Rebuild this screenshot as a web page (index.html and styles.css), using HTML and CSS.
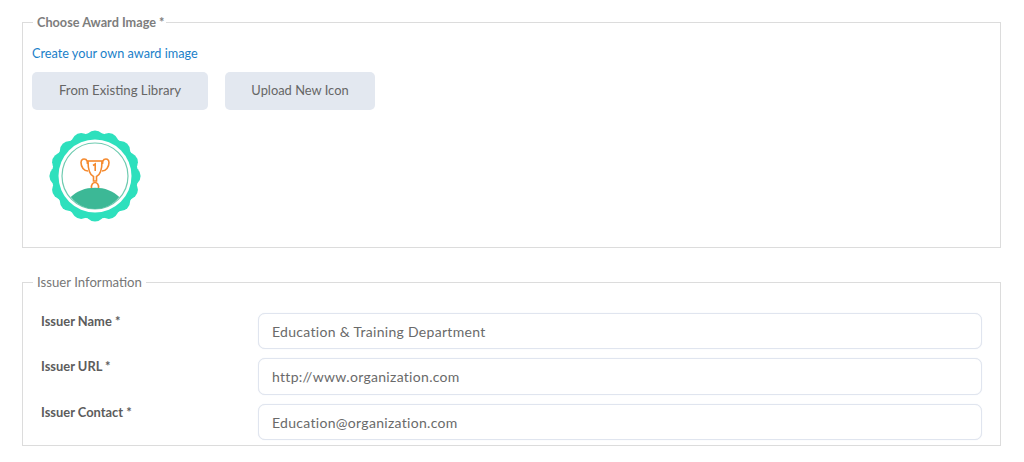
FILE: index.html
```html
<!DOCTYPE html>
<html lang="en">
<head>
<meta charset="utf-8">
<title>Award</title>
<link rel="stylesheet" href="styles.css">
</head>
<body>
<form class="page">
  <fieldset class="panel panel-image">
    <legend class="legend legend-strong">Choose Award Image *</legend>
    <a class="link" href="#">Create your own award image</a>
    <div class="actions">
      <button type="button" class="btn btn-library">From Existing Library</button>
      <button type="button" class="btn btn-upload">Upload New Icon</button>
    </div>
    <svg class="badge" width="94" height="94" viewBox="0 0 94 94" aria-hidden="true">
      <g fill="#2ee0bd">
        <circle cx="47" cy="47" r="43"/>
        <circle cx="47" cy="11" r="9.6"/><circle cx="60.8" cy="13.7" r="9.6"/><circle cx="72.5" cy="21.5" r="9.6"/><circle cx="80.3" cy="33.2" r="9.6"/>
        <circle cx="83" cy="47" r="9.6"/><circle cx="80.3" cy="60.8" r="9.6"/><circle cx="72.5" cy="72.5" r="9.6"/><circle cx="60.8" cy="80.3" r="9.6"/>
        <circle cx="47" cy="83" r="9.6"/><circle cx="33.2" cy="80.3" r="9.6"/><circle cx="21.5" cy="72.5" r="9.6"/><circle cx="13.7" cy="60.8" r="9.6"/>
        <circle cx="11" cy="47" r="9.6"/><circle cx="13.7" cy="33.2" r="9.6"/><circle cx="21.5" cy="21.5" r="9.6"/><circle cx="33.2" cy="13.7" r="9.6"/>
      </g>
      <circle cx="47" cy="47" r="36.5" fill="#fff"/>
      <circle cx="47" cy="47" r="33" fill="#fff" stroke="#6fcbb0" stroke-width="1.2"/>
      <path d="M22.7 68 C29 62 37 58.7 47 58.7 C57 58.7 65 62 71.3 68 C65 76 56 80 47 80 C38 80 29 76 22.7 68 Z" fill="#3cb896"/>
      <g fill="none" stroke="#f58a2e" stroke-width="1.6">
        <path d="M39 32 H55"/>
        <path d="M40 32 C40 41 42 46 45.5 47.5 V52 H48.5 V47.5 C52 46 54 41 54 32"/>
        <path d="M40 42 C36 42 33 38 33 33.5 C33 30 36 29.5 38 30.5 C39.5 31.5 39.5 33 39.5 35"/>
        <path d="M54 42 C58 42 61 38 61 33.5 C61 30 58 29.5 56 30.5 C54.5 31.5 54.5 33 54.5 35"/>
        <path d="M45 36.5 L47.2 35 V42"/>
        <path d="M43.5 59 C43 55.5 45 53.5 47 53.5 C49 53.5 51 55.5 50.5 59"/>
      </g>
    </svg>
  </fieldset>

  <fieldset class="panel panel-issuer">
    <legend class="legend legend-issuer">Issuer Information</legend>
    <div class="row">
      <label class="label" for="name">Issuer Name *</label>
      <input class="input" id="name" type="text" value="Education &amp; Training Department">
    </div>
    <div class="row row-tall">
      <label class="label" for="url">Issuer URL *</label>
      <input class="input input-tall" id="url" type="text" value="http://www.organization.com">
    </div>
    <div class="row">
      <label class="label" for="contact">Issuer Contact *</label>
      <input class="input" id="contact" type="text" value="Education@organization.com">
    </div>
  </fieldset>
</form>
</body>
</html>
```

FILE: styles.css
```css
* { box-sizing: border-box; }
html, body { margin: 0; background: #fff; }
body { font-family: Lato, "Liberation Sans", sans-serif; color: #555; overflow: hidden; }
.page { padding: 14px 23px 0 22px; display: flex; flex-direction: column; gap: 26px; }
.panel { margin: 0; border: 1px solid #dcdcdc; padding: 0; min-width: 0; }
.panel-image { height: 234px; padding: 14px 9px 0; }
.panel-issuer { height: 172px; padding: 23px 18px 0; }
.legend { margin-left: 1px; padding: 0 4px; font-size: 13.2px; line-height: 16px; color: #777; }
.legend-strong { font-size: 12.7px; font-weight: 700; padding: 0 1px 0 4px; color: #7d7d7d; }
.legend-issuer { margin-left: -8px; }
.link { display: block; font-size: 12.7px; line-height: 18px; color: #1a7fc9; text-decoration: none; }
.actions { display: flex; gap: 17px; margin-top: 10px; }
.btn { height: 38px; border: 0; border-radius: 5px; background: #e3e8f0; font: 400 13.2px Lato, "Liberation Sans", sans-serif; color: #666; padding: 0 0 2px; }
.btn-library { width: 176px; }
.btn-upload { width: 150px; font-size: 12.9px; }
.badge { display: block; margin: 19px 0 0 16px; }
.row { display: flex; align-items: flex-start; height: 45px; }
.row-tall { height: 46px; }
.label { width: 217px; font-size: 12.9px; line-height: 16px; font-weight: 700; color: #5c5c5c; }
.input { width: 724px; height: 36px; border: 1px solid #e0e5ef; border-radius: 7px; padding: 0 13px; font: 400 14px Lato, "Liberation Sans", sans-serif; letter-spacing: 0.3px; color: #6a6a6a; background: #fff; outline: 0; box-shadow: 0 0 1px #dfe4ee; }
.input-tall { height: 37px; }
```
